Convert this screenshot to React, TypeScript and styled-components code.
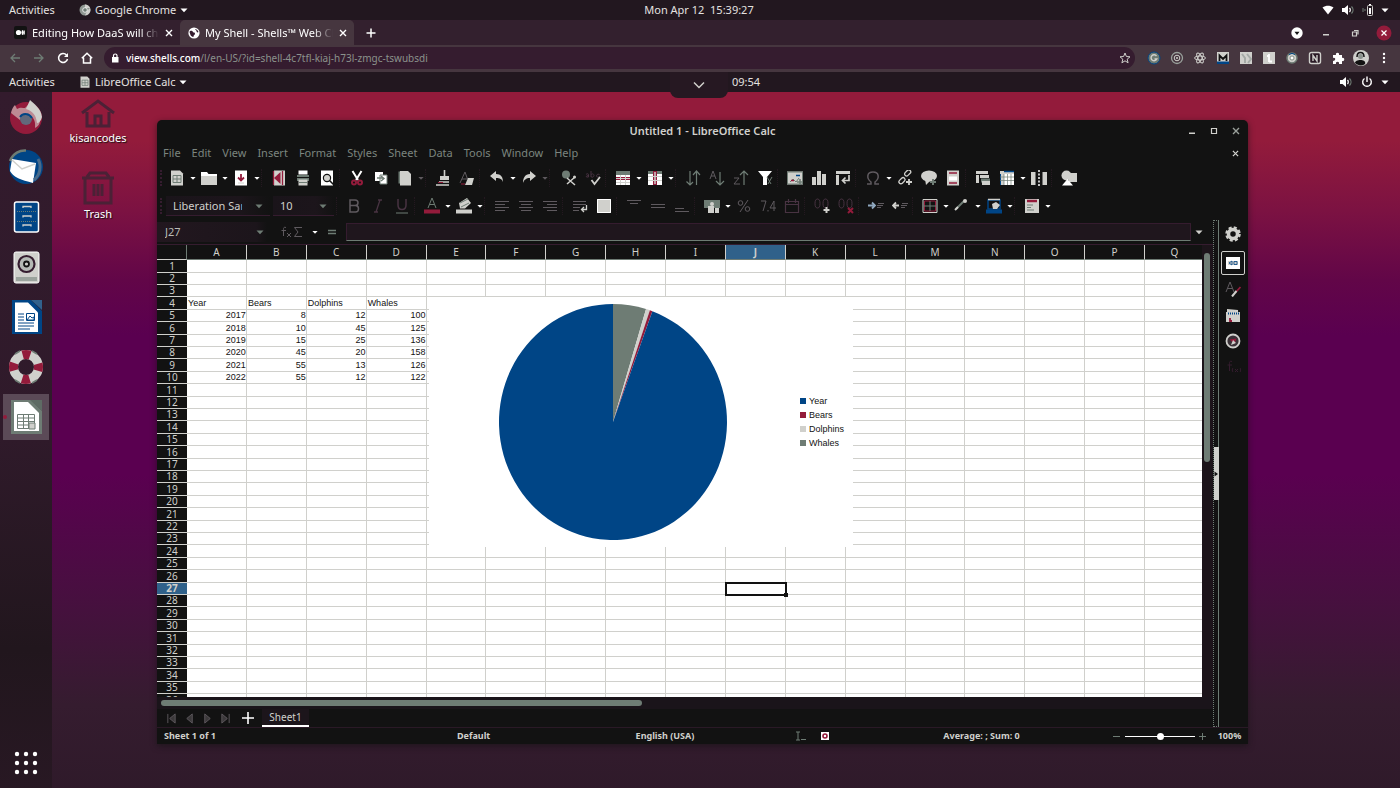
import React from "react";
import styled, { createGlobalStyle, css } from "styled-components";

const c = {
  ink: "#121212",
  plum: "#351c2f",
  bar: "#22171f",
  tabBg: "#33202e",
  chrome: "#46363f",
  magenta: "#5a0050",
  red: "#931b3b",
  blue: "#004586",
  grey: "#6e7c74",
  light: "#d0d0cc",
  white: "#ffffff",
  dim: "#5f5a5f",
  faint: "#483342",
};

const Global = createGlobalStyle`
  * { box-sizing: border-box; }
  html, body { margin: 0; padding: 0; }
  body { font-family: "Noto Sans", "Open Sans", sans-serif; font-size: 11px; line-height: 14px; background: ${c.ink}; color: ${c.light}; }
  button, input { font: inherit; color: inherit; background: none; border: 0; padding: 0; margin: 0; outline: 0; min-width: 0; }
  a { color: inherit; text-decoration: none; }
  svg { display: block; flex: none; }
`;

/* ---------- shared parts ---------- */

const Page = styled.div`
  display: flex;
  flex-direction: column;
  height: 100vh;
  min-height: 560px;
  overflow: hidden;
`;

const Caret = ({ size = 8, color = c.white }: { size?: number; color?: string }) => (
  <svg width={size} height={size} viewBox="0 0 8 8">
    <path d="M0.5 2.5h7L4 6.3z" fill={color} />
  </svg>
);

const SystemBar = styled.header`
  flex: none;
  height: 20px;
  display: grid;
  grid-template-columns: 1fr auto 1fr;
  grid-template-rows: 20px;
  align-items: center;
  background: ${c.bar};
  color: #e4e2e0;
  padding: 0 11px 0 9px;
`;

const BarSide = styled.div<{ $end?: boolean }>`
  display: flex;
  align-items: center;
  gap: ${(p) => (p.$end ? 7 : 4)}px;
  justify-content: ${(p) => (p.$end ? "flex-end" : "flex-start")};
`;

const BarButton = styled.button<{ $wide?: boolean }>`
  display: flex;
  align-items: center;
  gap: 4px;
  white-space: nowrap;
  width: ${(p) => (p.$wide ? "66px" : "auto")};
`;

/* ---------- browser ---------- */

const TabStrip = styled.div`
  flex: none;
  height: 25px;
  display: flex;
  align-items: stretch;
  background: ${c.tabBg};
  padding: 0 9px 0 6px;
`;

const BrowserTab = styled.div<{ $active?: boolean }>`
  width: 174px;
  display: flex;
  align-items: center;
  gap: 5px;
  padding: 0 6px 0 8px;
  border-radius: 5px 5px 0 0;
  background: ${(p) => (p.$active ? c.chrome : "transparent")};
`;

const TabTitle = styled.a`
  flex: 1;
  overflow: hidden;
  white-space: nowrap;
  line-height: 16px;
  color: ${c.white};
  mask-image: linear-gradient(90deg, #000 85%, transparent 100%);
`;

const IconButton = styled.button`
  display: flex;
  align-items: center;
  justify-content: center;
  width: 14px;
  height: 100%;
  flex: none;
`;

const TabClose = styled(IconButton)`
  width: 10px;
`;

const NewTab = styled(IconButton)`
  width: 34px;
`;

const WindowControls = styled.div`
  margin-left: auto;
  display: flex;
  align-items: center;
  gap: 15px;
`;

const AddressRow = styled.div`
  flex: none;
  height: 27px;
  display: flex;
  align-items: center;
  background: ${c.chrome};
  padding: 0 8px 2px 8px;
`;

const NavButtons = styled.div`
  display: flex;
  gap: 10px;
  width: 96px;
`;

const AddressBox = styled.label`
  flex: 1;
  height: 22px;
  display: flex;
  align-items: center;
  gap: 6px;
  border-radius: 11px;
  background: ${c.plum};
  padding: 0 3px 0 6px;
`;

const AddressText = styled.div`
  flex: 1;
  font-size: 10px;
  white-space: nowrap;
  overflow: hidden;
  color: #8b928c;
  b { color: ${c.white}; font-weight: 500; }
`;

const Extensions = styled.div`
  display: flex;
  align-items: center;
  gap: 7px;
  padding-left: 11px;
`;

const ExtButton = styled.button`
  display: flex;
  align-items: center;
  justify-content: center;
  width: 16px;
  height: 18px;
`;

/* ---------- remote desktop ---------- */

const Handle = styled.button`
  width: 58px;
  height: 26px;
  align-self: start;
  display: flex;
  align-items: center;
  justify-content: center;
  background: #261822;
  border-radius: 0 0 8px 8px;
  position: relative;
  z-index: 2;
`;

const ClockSide = styled.div`
  display: flex;
  align-items: center;
  justify-content: space-between;
  padding-left: 4px;
`;

const Workspace = styled.div`
  flex: 1;
  min-height: 0;
  display: flex;
`;

const Dock = styled.nav`
  flex: none;
  width: 52px;
  display: flex;
  flex-direction: column;
  align-items: center;
  gap: 4px;
  padding: 2px 3px;
  background: linear-gradient(#331b2d 0%, #2f1a2a 50%, #21161d 80%, #281823 100%);
`;

const DockItem = styled.button<{ $active?: boolean; $last?: boolean }>`
  width: 46px;
  height: 46px;
  display: flex;
  align-items: center;
  justify-content: center;
  position: relative;
  background: ${(p) => (p.$active ? "#5b4a57" : "transparent")};
  ${(p) => p.$last && css`margin-top: auto;`}
  ${(p) =>
    p.$active &&
    css`
      &::before {
        content: "";
        position: absolute;
        left: 0;
        top: 21px;
        width: 4px;
        height: 4px;
        border-radius: 50%;
        background: ${c.red};
      }
    `}
`;

const Desktop = styled.main`
  flex: 1;
  min-width: 0;
  position: relative;
  background: linear-gradient(
    ${c.red} 0%,
    ${c.red} 7%,
    #7c1242 17%,
    #620648 27%,
    ${c.magenta} 35%,
    ${c.magenta} 55%,
    #480f40 72%,
    ${c.plum} 88%,
    #2f1a2a 100%
  );
`;

const Shortcuts = styled.div`
  width: 92px;
  display: flex;
  flex-direction: column;
  gap: 24px;
  padding-top: 5px;
`;

const Shortcut = styled.button`
  display: flex;
  flex-direction: column;
  align-items: center;
  height: 48px;
  color: ${c.white};
  text-shadow: 1px 1px 1px ${c.ink};
`;

/* ---------- calc window ---------- */

const CalcWindow = styled.section`
  position: absolute;
  inset: 28px 152px 44px 105px;
  display: flex;
  flex-direction: column;
  overflow: hidden;
  background: ${c.ink};
  border-radius: 5px 5px 0 0;
  box-shadow: 0 2px 6px rgba(18, 18, 18, 0.6);
`;

const TitleBar = styled.div`
  flex: none;
  height: 22px;
  display: grid;
  grid-template-columns: 1fr auto 1fr;
  align-items: center;
  padding: 0 5px;
  h1 { margin: 0; font-size: 11px; line-height: 14px; font-weight: 600; color: ${c.light}; }
`;

const TitleButtons = styled.div`
  display: flex;
  justify-content: flex-end;
  gap: 8px;
`;

const MenuBar = styled.div`
  flex: none;
  height: 22px;
  display: flex;
  align-items: center;
  gap: 11px;
  padding: 0 6px 0 6px;
  color: #7b857f;
`;

const MenuClose = styled(IconButton)`
  margin-left: auto;
`;

const ToolRow = styled.div`
  flex: none;
  height: 28px;
  display: flex;
  align-items: center;
  padding-left: 3px;
`;

const Grip = styled.i`
  width: 5px;
  height: 16px;
  border-left: 2px dotted ${c.plum};
`;

const ToolButton = styled.button`
  width: 24px;
  height: 24px;
  flex: none;
  display: flex;
  align-items: center;
  justify-content: center;
`;

const ToolCaret = styled.button`
  width: 8px;
  height: 24px;
  flex: none;
  display: flex;
  align-items: center;
  justify-content: center;
`;

const ToolGap = styled.i<{ $wide?: boolean }>`
  width: ${(p) => (p.$wide ? 8 : 6)}px;
  height: 18px;
  flex: none;
  border-left: 1px dotted #241820;
`;

const Combo = styled.label<{ $w: number }>`
  width: ${(p) => p.$w}px;
  height: 20px;
  flex: none;
  display: flex;
  align-items: center;
  justify-content: space-between;
  padding: 0 7px;
  margin: 0 2px 0 1px;
  border-bottom: 1px solid ${c.plum};
  background: linear-gradient(90deg, #1a141a, #1c151b 70%, ${c.ink});
  color: ${c.light};
  input { width: 69px; flex: 0 1 69px; }
`;

const Body = styled.div`
  flex: 1;
  min-height: 0;
  display: flex;
`;

const SheetColumn = styled.div`
  flex: 1;
  min-width: 0;
  display: flex;
  flex-direction: column;
`;

const FormulaBar = styled.div`
  flex: none;
  height: 25px;
  display: flex;
  align-items: center;
  border-bottom: 1px solid ${c.plum};
`;

const NameBox = styled.label`
  width: 110px;
  height: 20px;
  display: flex;
  align-items: center;
  justify-content: space-between;
  padding: 0 3px 0 8px;
  background: linear-gradient(90deg, #22171f, #1c151b 90%, ${c.ink});
  color: #b9bbb7;
  input { width: 70px; }
`;

const FormulaTools = styled.div`
  width: 79px;
  display: flex;
  align-items: center;
  padding-left: 12px;
`;

const FormulaInput = styled.input`
  flex: 1;
  height: 18px;
  border: 1px solid ${c.plum};
  border-bottom-color: ${c.grey};
  background: #1f161d;
`;

const FormulaExpand = styled.button`
  width: 22px;
  height: 20px;
  padding-right: 6px;
  display: flex;
  align-items: center;
  justify-content: center;
`;

const SheetArea = styled.div`
  flex: 1;
  min-height: 0;
  display: flex;
`;

const GridPane = styled.div`
  flex: 1;
  min-width: 0;
  position: relative;
  overflow: hidden;
  background: ${c.white};
`;

const Grid = styled.table`
  width: calc(100% + 3px);
  table-layout: fixed;
  border-collapse: separate;
  border-spacing: 0;
  th, td { padding: 0; height: 12px; line-height: 11px; white-space: nowrap; }
  tr:nth-child(5n + 1) > *, tr:nth-child(5n + 4) > * { height: 13px; line-height: 12px; }
  thead tr:first-child > * { height: 15px; line-height: 14px; }
`;

const CornerCell = styled.th`
  width: 30px;
  background: ${c.ink};
  border-bottom: 1px solid ${c.light};
  border-right: 1px solid ${c.grey};
`;

const ColHead = styled.th<{ $on?: boolean }>`
  background: ${(p) => (p.$on ? "#30618a" : c.ink)};
  color: ${c.light};
  font-size: 10px;
  font-weight: ${(p) => (p.$on ? 700 : 400)};
  border-right: 1px solid ${c.light};
  border-bottom: 1px solid ${c.grey};
`;

const RowHead = styled.th<{ $on?: boolean }>`
  background: ${(p) => (p.$on ? "#30618a" : c.ink)};
  color: ${c.light};
  font-size: 10px;
  font-weight: ${(p) => (p.$on ? 700 : 400)};
  border-bottom: 1px solid ${c.light};
`;

const Cell = styled.td<{ $num?: boolean; $on?: boolean }>`
  border-right: 1px solid ${c.light};
  border-bottom: 1px solid ${c.light};
  color: ${c.ink};
  font-family: "Liberation Sans", sans-serif;
  font-size: 9px;
  text-align: ${(p) => (p.$num ? "right" : "left")};
  padding-left: 1px !important;
  ${(p) =>
    p.$on &&
    css`
      outline: 2px solid ${c.ink};
      outline-offset: -1px;
      position: relative;
      &::after {
        content: "";
        position: absolute;
        right: -3px;
        bottom: -3px;
        width: 4px;
        height: 4px;
        background: ${c.ink};
      }
    `}
`;

const Chart = styled.figure`
  position: absolute;
  left: 272px;
  top: 52px;
  width: 424px;
  height: 250px;
  margin: 0;
  display: flex;
  align-items: center;
  background: ${c.white};
  padding: 0 9px 0 69px;
  justify-content: space-between;
`;

const Legend = styled.figcaption`
  display: flex;
  flex-direction: column;
  font-family: "Liberation Sans", sans-serif;
  font-size: 9px;
  line-height: 14px;
  color: ${c.ink};
`;

const LegendItem = styled.span<{ $color: string }>`
  display: flex;
  align-items: center;
  gap: 3px;
  &::before { content: ""; width: 6px; height: 6px; background: ${(p) => p.$color}; }
`;

const VScroll = styled.div`
  flex: none;
  width: 11px;
  background: #1c141a;
  padding: 8px 3px 0 2px;
  i { display: block; width: 6px; height: 47%; border-radius: 3px; background: ${c.grey}; }
`;

const HScroll = styled.div`
  flex: none;
  height: 12px;
  padding: 3px 7px 3px 4px;
  background: #1a141a;
  i { display: block; width: 46%; height: 6px; border-radius: 3px; background: ${c.grey}; }
`;

const SheetTabs = styled.div`
  flex: none;
  height: 18px;
  display: flex;
  align-items: stretch;
  gap: 4px;
  padding-left: 7px;
`;

const AddSheet = styled(IconButton)`
  width: 20px;
  margin: 0 1px 0 2px;
`;

const SheetTab = styled.button`
  width: 47px;
  margin-left: -1px;
  font-size: 10px;
  background: #1c151b;
  color: ${c.light};
  border-bottom: 2px solid ${c.white};
`;

const Splitter = styled.div`
  flex: none;
  width: 6px;
  border: 1px dotted ${c.grey};
  border-right: 1px solid ${c.grey};
  display: flex;
  align-items: center;
  button { width: 5px; height: 53px; flex: none; background: ${c.light}; display: flex; align-items: center; }
`;

const Sidebar = styled.aside`
  flex: none;
  width: 29px;
  display: flex;
  flex-direction: column;
  align-items: center;
  gap: 2px;
  padding: 2px 1px 0 0;
`;

const SideButton = styled.button<{ $on?: boolean; $gap?: boolean }>`
  width: 24px;
  height: 24px;
  flex: none;
  display: flex;
  align-items: center;
  justify-content: center;
  border-radius: 2px;
  border: 1px solid ${(p) => (p.$on ? c.light : "transparent")};
  margin-top: ${(p) => (p.$gap ? 3 : 0)}px;
`;

const StatusBar = styled.footer`
  flex: none;
  height: 17px;
  display: grid;
  grid-template-columns: 293fr 135fr 160fr 111fr 251fr 104fr 37fr;
  align-items: center;
  border-top: 1px solid #2a1926;
  font-size: 9px;
  font-weight: 700;
  line-height: 12px;
  color: ${c.light};
`;

const StatusCell = styled.div<{ $center?: boolean; $end?: boolean }>`
  display: flex;
  align-items: center;
  gap: 14px;
  min-width: 0;
  padding: 0 ${(p) => (p.$end ? 27 : 0)}px 0 ${(p) => (p.$center || p.$end ? 0 : 7)}px;
  justify-content: ${(p) => (p.$center ? "center" : p.$end ? "flex-end" : "flex-start")};
  white-space: nowrap;
`;

const ZoomCell = styled.div`
  display: flex;
  align-items: center;
  gap: 4px;
  min-width: 0;
  padding: 0 4px 0 6px;
  button { width: 8px; height: 12px; flex: none; display: flex; align-items: center; }
`;

const ZoomRange = styled.input`
  flex: 1;
  width: 0;
  height: 8px;
  appearance: none;
  &::-webkit-slider-runnable-track { height: 1px; background: ${c.white}; }
  &::-webkit-slider-thumb { appearance: none; width: 7px; height: 7px; margin-top: -3px; border-radius: 50%; background: ${c.white}; }
`;

/* ---------- icons ---------- */

const Svg = ({ s = 16, children }: { s?: number; children: React.ReactNode }) => (
  <svg width={s} height={s} viewBox="0 0 16 16" fill="none">
    {children}
  </svg>
);

const CloseIcon = ({ color = c.light, s = 8 }: { color?: string; s?: number }) => (
  <svg width={s} height={s} viewBox="0 0 8 8" fill="none">
    <path d="M1 1l6 6M7 1L1 7" stroke={color} strokeWidth="1.4" />
  </svg>
);

const lines = (spec: [number, number, number][], color: string = c.grey) =>
  spec.map(([x, y, w], i) => <path key={i} d={`M${x} ${y}h${w}`} stroke={color} />);

const sheetGlyph = (
  <>
    <path d="M2 0.500h9l3 3v12H2z" fill={c.light} />
    <path d="M4 5.500h8v7H4zM4 9h8M8 5.500v7" stroke={c.grey} />
  </>
);

const sheetBox = <path d="M1 1h14v14H1z" fill={c.white} />;

const icons: Record<string, React.ReactNode> = {
  new: sheetGlyph,
  open: (
    <>
      <path d="M0 2h6l1.500 2H16v11H0z" fill={c.white} />
      <path d="M0 6h16v9H0z" fill={c.light} />
    </>
  ),
  save: (
    <>
      <path d="M2 .5h12v15H2z" fill={c.white} />
      <path d="M8 4v6M5 7.500l3 3 3-3" stroke={c.red} strokeWidth="1.800" />
      <path d="M5 13h6" stroke={c.light} />
    </>
  ),
  pdf: (
    <>
      <path d="M3 .5h11v15H3z" fill={c.light} />
      <path d="M9.500 2v12L3 8z" fill={c.red} />
      <path d="M2.500 1v14M11.500 1v14" stroke={c.red} strokeWidth="1.300" />
    </>
  ),
  print: (
    <>
      <path d="M3.500 .5h9v4h-9z" fill={c.white} />
      <path d="M2 5h12v6H2z" fill={c.grey} />
      <path d="M2 7.500h12" stroke={c.ink} />
      <path d="M3.500 9.500h9v6h-9z" fill={c.light} />
      <path d="M4 12.500h8" stroke={c.grey} />
    </>
  ),
  preview: (
    <>
      <path d="M2 .5h12v15H2z" fill={c.white} />
      <circle cx="8" cy="8" r="3.600" fill={c.light} stroke={c.ink} strokeWidth="1.200" />
      <path d="M10.500 10.500l4 4" stroke={c.ink} strokeWidth="1.600" />
    </>
  ),
  cut: (
    <>
      <path d="M3.500 1L9 10M12.500 1L7 10" stroke={c.white} strokeWidth="2" />
      <circle cx="5" cy="12.500" r="2" stroke={c.red} strokeWidth="2" />
      <circle cx="11" cy="12.500" r="2" stroke={c.red} strokeWidth="2" />
    </>
  ),
  copy: (
    <>
      <path d="M2 2h8v9H2z" fill={c.white} />
      <path d="M7 5h7v9H7z" fill={c.white} stroke={c.grey} />
      <path d="M4 8h6M8 6l3 2.500L8 11" stroke={c.grey} strokeWidth="1.400" />
    </>
  ),
  paste: (
    <>
      <path d="M1.500 1.500h9v12h-9z" fill={c.grey} />
      <path d="M3 1h8l3 3v11.500H3z" fill={c.light} />
    </>
  ),
  brush: (
    <>
      <path d="M9.500 0v6" stroke={c.light} strokeWidth="1.600" />
      <path d="M5 6h9v4H5z" fill={c.light} />
      <path d="M4 12h10M1 15h13" stroke={c.light} strokeWidth="1.500" />
      <path d="M3 12.500h5" stroke={c.red} />
    </>
  ),
  clear: (
    <>
      <path d="M1 13L6 2l2.500 7M3 9h5" stroke={c.dim} />
      <path d="M9 8h6l-2 7H6z" fill={c.light} />
      <path d="M2 14h4" stroke={c.red} />
    </>
  ),
  undo: <path d="M1 6l6-5v3c5 0 7 3 7 8-1-3-3-4-7-4v3z" fill={c.light} />,
  redo: <path d="M15 6L9 1v3C4 4 2 8 2 13c1-3 3-5 7-5v3z" fill={c.light} />,
  find: (
    <>
      <circle cx="5" cy="4.500" r="4" fill={c.grey} />
      <path d="M6 8l8 7M14 7l-8 7" stroke={c.light} strokeWidth="1.500" />
      <circle cx="13.500" cy="7" r="1.500" fill={c.light} />
    </>
  ),
  spell: (
    <>
      <path d="M1 4.500c1-1 2.500-1 2.500 0V7M3.500 5.500C2 5.500 1 6 1.500 7h2M6 1v6M6 5c1-2 3-1 3 .5S7 8 6 6.500M14.500 4.500c-2-1-3 .5-3 1.500s1.500 1.500 3 .5" stroke={c.faint} />
      <path d="M6.500 10l3 4 5.500-7" stroke={c.light} strokeWidth="1.800" />
    </>
  ),
  row: (
    <>
      {sheetBox}
      <path d="M1 1h14v4H1z" fill={c.grey} />
      <path d="M1 7h14v3H1z" fill={c.red} />
      <path d="M1 8.500h14" stroke={c.light} />
      <path d="M1 12.500h14M5.500 5v10M10.500 5v10" stroke={c.light} />
    </>
  ),
  col: (
    <>
      {sheetBox}
      <path d="M1 1h14v3H1z" fill={c.grey} />
      <path d="M6 1h4v14H6z" fill={c.red} />
      <path d="M8 2v12" stroke={c.light} strokeWidth="1.500" />
      <path d="M1 6.500h14M1 10.500h14" stroke={c.light} />
    </>
  ),
  sort: <path d="M5 1v14M1.500 11.500L5 15l3-3M11.500 15V1M8 5l3.500-4L15 5" stroke={c.grey} strokeWidth="1.200" />,
  asc: (
    <>
      <path d="M1 9l3-8 3 8M2 6h4" stroke={c.dim} />
      <path d="M11 2v13M7 11l4 4 4-4" stroke={c.grey} strokeWidth="1.200" />
    </>
  ),
  desc: (
    <>
      <path d="M1 8h5l-5 6h6" stroke={c.dim} />
      <path d="M11 15V1M7 5l4-4 4 4" stroke={c.grey} strokeWidth="1.200" />
    </>
  ),
  filter: (
    <>
      <path d="M1 1h14l-5 6v8H6V7z" fill={c.white} />
      <path d="M10 7l4 7M15 7l-4 7" stroke={c.grey} />
    </>
  ),
  image: (
    <>
      <path d="M0 1.500h16v13H0z" fill={c.light} />
      <path d="M.5 2h15v12H.5z" stroke={c.grey} />
      <path d="M3 12l3-3 3 3 3-4" stroke={c.grey} />
      <path d="M9 5.500h4" stroke={c.blue} strokeWidth="1.500" />
      <path d="M4 10.500h3" stroke={c.red} strokeWidth="1.500" />
      <path d="M13 9v6M10 12h6" stroke={c.grey} strokeWidth="1.600" />
    </>
  ),
  chart: <path d="M1 7h4v8H1zM6 1h4v14H6zM11 4h4v11h-4z" fill={c.light} />,
  pivot: (
    <>
      <path d="M1 1h14v3H1z" fill={c.light} />
      <path d="M1 5h3v10H1z" fill={c.light} />
      <path d="M14 5v5.500H8M10.500 7.500l-3 3 3 3" stroke={c.light} strokeWidth="1.700" />
    </>
  ),
  omega: <path d="M2 14h4v-2C1 8 2 2 8 2s7 6 2 10v2h4" stroke={c.dim} strokeWidth="1.500" />,
  link: (
    <>
      <rect x="8" y="1" width="7" height="4" rx="2" transform="rotate(-45 11 4)" stroke={c.light} strokeWidth="1.300" />
      <rect x="1" y="8.500" width="7" height="4" rx="2" transform="rotate(-45 5 10)" stroke={c.light} strokeWidth="1.300" />
      <path d="M12 9v6M9 12h6" stroke={c.light} strokeWidth="1.800" />
    </>
  ),
  comment: (
    <>
      <ellipse cx="8" cy="6" rx="8" ry="5.500" fill={c.light} />
      <path d="M4 9l1 6 4-4z" fill={c.light} />
      <path d="M12 9v6M9 12h6" stroke={c.grey} strokeWidth="2" />
    </>
  ),
  header: (
    <>
      <path d="M2 .5h12v15H2z" fill={c.light} />
      <path d="M4 3h8M4 13h8" stroke={c.red} strokeWidth="1.500" />
      <path d="M4 6.500h8v4H4z" fill={c.white} />
    </>
  ),
  area: (
    <>
      <path d="M1 1h12v3H1zM1 5h3v8H1z" fill={c.light} />
      <path d="M5 5h9v3H5z" fill={c.light} />
      <path d="M6 8.500h9v4H6z" fill={c.grey} />
      <path d="M7 11h8v4H7z" fill={c.light} />
    </>
  ),
  freeze: (
    <>
      {sheetBox}
      <path d="M1 1h14v3H1zM1 4h4v11H1z" fill={c.light} />
      <path d="M5 1.500h10" stroke={c.blue} strokeWidth="1.500" />
      <path d="M1.500 4v11" stroke={c.blue} />
      <path d="M1 7h14M1 10.500h14M5 4v11M8.500 4v11M12 4v11" stroke={c.grey} strokeWidth=".7" />
    </>
  ),
  split: (
    <>
      <path d="M0 2h4.500v13H0zM11.500 2H16v13h-4.500z" fill={c.light} />
      <path d="M8 0v16" stroke={c.white} strokeDasharray="2 1.500" strokeWidth="1.500" />
    </>
  ),
  shapes: (
    <>
      <circle cx="5.500" cy="5.500" r="5" fill={c.light} />
      <path d="M8 3h8v9H8z" fill={c.light} />
      <path d="M6.500 9l5.500 6.500H1z" fill={c.white} />
    </>
  ),
  bold: <path d="M4 2h5c4 0 4 5.500 0 5.500H4zM4 7.500h5.500c4 0 4 6.500 0 6.500H4z" stroke={c.dim} strokeWidth="1.500" />,
  italic: <path d="M8 2h4M4 14h4M10 2L6 14" stroke={c.faint} strokeWidth="1.300" />,
  underline: (
    <>
      <path d="M4 1v6c0 6 8 6 8 0V1" stroke={c.faint} strokeWidth="1.500" />
      <path d="M2 15h12" stroke={c.grey} />
    </>
  ),
  fontColor: (
    <>
      <path d="M4 10l4-10 4 10M5.500 6.500h5" stroke={c.grey} />
      <path d="M0 11.500h16v4H0z" fill={c.red} />
    </>
  ),
  fill: (
    <>
      <path d="M3 5l8-5 4 5-6 5.500H4z" fill={c.light} />
      <path d="M4 5l8-4M5 9l8-4" stroke={c.grey} />
      <path d="M0 11.500h16v4H0z" fill={c.light} />
    </>
  ),
  alignL: lines([[1, 3.5, 14], [1, 6.5, 10], [1, 9.5, 14], [1, 12.5, 10]], c.dim),
  alignC: lines([[1, 3.5, 14], [3, 6.5, 10], [1, 9.5, 14], [3, 12.5, 10]], c.dim),
  alignR: lines([[1, 3.5, 14], [5, 6.5, 10], [1, 9.5, 14], [5, 12.5, 10]], c.dim),
  wrap: (
    <>
      {lines([[1, 3.5, 13], [1, 6.5, 13], [1, 9.5, 7], [1, 12.5, 6]], c.dim)}
      <path d="M14.500 7v4.500H9.500M12 9l-2.500 2.500L12 14" stroke={c.light} strokeWidth="1.300" />
    </>
  ),
  merge: (
    <>
      <path d="M1 1h14v14H1z" fill={c.light} />
      <path d="M1.500 1.500h13v13h-13z" stroke={c.white} />
    </>
  ),
  top: lines([[1, 2.5, 14], [4, 5.5, 8]], c.dim),
  middle: lines([[1, 6.5, 14], [1, 9.5, 14]], c.dim),
  bottom: lines([[1, 10.5, 9], [1, 13.5, 14]], c.dim),
  currency: (
    <>
      <path d="M0 2h16v8H0z" fill={c.grey} />
      <path d="M4 8h6v7H4zM11 10h4v5h-4z" fill={c.light} />
      <circle cx="8" cy="6" r="2" fill={c.light} />
    </>
  ),
  percent: (
    <>
      <circle cx="4.500" cy="5" r="2.300" stroke={c.dim} />
      <circle cx="11.500" cy="11" r="2.300" stroke={c.dim} />
      <path d="M12 2L4 14" stroke={c.dim} />
    </>
  ),
  number: <path d="M1 3h5L3 13M8 12v1.500M14 13V3l-4 7h6" stroke={c.dim} />,
  date: <path d="M1.500 3.500h13v11h-13zM1.500 6.500h13M4.500 1v4M11.500 1v4" stroke={c.faint} strokeWidth="1.200" />,
  addDec: (
    <>
      <ellipse cx="3.500" cy="5.500" rx="2.500" ry="4.500" stroke={c.faint} />
      <ellipse cx="11.500" cy="5.500" rx="2.500" ry="4.500" stroke={c.faint} />
      <path d="M12.500 9v6M9.500 12h6" stroke={c.light} strokeWidth="2" />
    </>
  ),
  delDec: (
    <>
      <ellipse cx="3.500" cy="5.500" rx="2.500" ry="4.500" stroke={c.faint} />
      <ellipse cx="11.500" cy="5.500" rx="2.500" ry="4.500" stroke={c.faint} />
      <path d="M10 10l5 5M15 10l-5 5" stroke={c.red} strokeWidth="2" />
    </>
  ),
  indent: (
    <>
      <path d="M0 7.500h6M4 4.500l3 3-3 3" stroke="#8fa8bf" strokeWidth="1.800" />
      {lines([[10, 5.5, 6], [9, 7.5, 6], [9, 9.5, 4]], c.dim)}
    </>
  ),
  outdent: (
    <>
      <path d="M1 7.500h6M4 4.500l-3 3 3 3" stroke={c.light} strokeWidth="1.800" />
      {lines([[10, 5.5, 6], [9, 7.5, 6], [9, 9.5, 4]], c.dim)}
    </>
  ),
  border: (
    <>
      <path d="M1 1.500h14v13H1z" stroke={c.light} />
      <path d="M2.500 3h11v10h-11z" stroke={c.red} />
      <path d="M8 3v10M2 8h12" stroke={c.grey} />
    </>
  ),
  lineStyle: (
    <>
      <path d="M2 11l8-8" stroke={c.grey} strokeWidth="2" />
      <circle cx="11" cy="3" r="2" fill={c.light} />
      <path d="M1 12l3-3" stroke={c.light} strokeWidth="2" />
    </>
  ),
  bgColor: (
    <>
      <path d="M2 2h12v9H2z" stroke={c.blue} strokeWidth="1.500" />
      <path d="M2 1.500h12" stroke={c.light} strokeWidth="1.500" />
      <path d="M6 6l4-2 4 3-3 4H7z" fill={c.light} />
      <path d="M0 11.500h16v4H0z" fill={c.blue} />
    </>
  ),
  conditional: (
    <>
      <path d="M1 1h14v14H1z" fill={c.light} />
      <path d="M3 3h10" stroke={c.red} strokeWidth="2.500" />
      <path d="M3 7h6M3 9.500h4M3 12h7" stroke={c.grey} strokeWidth="1.200" />
    </>
  ),
};

type Tool = [name: string, label: string, caret?: 0 | 1 | 2];

const mainTools: Tool[][] = [
  [["new", "New", 1], ["open", "Open", 1], ["save", "Save", 1]],
  [["pdf", "Export as PDF"], ["print", "Print"], ["preview", "Print preview"]],
  [["cut", "Cut"], ["copy", "Copy"], ["paste", "Paste", 2]],
  [["brush", "Clone formatting"], ["clear", "Clear formatting"]],
  [["undo", "Undo", 1], ["redo", "Redo", 2]],
  [["find", "Find and replace"], ["spell", "Spelling"]],
  [["row", "Row", 1], ["col", "Column", 1]],
  [["sort", "Sort"], ["asc", "Sort ascending"], ["desc", "Sort descending"], ["filter", "AutoFilter"]],
  [["image", "Image"], ["chart", "Chart"], ["pivot", "Pivot table"]],
  [["omega", "Special character", 1], ["link", "Hyperlink"], ["comment", "Comment"], ["header", "Headers and footers"]],
  [["area", "Print area"], ["freeze", "Freeze", 1], ["split", "Split window"]],
  [["shapes", "Draw functions"]],
];

const formatTools: Tool[][] = [
  [["bold", "Bold"], ["italic", "Italic"], ["underline", "Underline"]],
  [["fontColor", "Font color", 1], ["fill", "Highlight color", 1]],
  [["alignL", "Align left"], ["alignC", "Align center"], ["alignR", "Align right"]],
  [["wrap", "Wrap text"], ["merge", "Merge cells"]],
  [["top", "Align top"], ["middle", "Center vertically"], ["bottom", "Align bottom"]],
  [["currency", "Currency", 1], ["percent", "Percent"], ["number", "Number"], ["date", "Date"]],
  [["addDec", "Add decimal place"], ["delDec", "Delete decimal place"]],
  [["indent", "Increase indent"], ["outdent", "Decrease indent"]],
  [["border", "Borders", 1], ["lineStyle", "Border style", 1], ["bgColor", "Background color", 1]],
  [["conditional", "Conditional formatting", 1]],
];

const ToolGroups = ({ groups, wideAt }: { groups: Tool[][]; wideAt?: number }) => (
  <>
    {groups.map((group, i) => (
      <React.Fragment key={i}>
        {i > 0 && <ToolGap $wide={i === wideAt} />}
        {group.map(([name, label, caret]) => (
          <React.Fragment key={name}>
            <ToolButton aria-label={label}>
              <Svg>{icons[name]}</Svg>
            </ToolButton>
            {caret ? (
              <ToolCaret aria-label={`${label} options`}>
                <Caret size={6} color={caret === 2 ? c.dim : c.white} />
              </ToolCaret>
            ) : null}
          </React.Fragment>
        ))}
      </React.Fragment>
    ))}
  </>
);

const Volume = () => (
  <svg width="14" height="12" viewBox="0 0 14 12" fill="none">
    <path d="M1 4h2.500L7 1v10L3.500 8H1z" fill={c.white} />
    <path d="M8.500 4c1 1 1 3 0 4" stroke={c.white} strokeWidth="1.300" />
    <path d="M10.500 2.500c2 2 2 5 0 7" stroke={c.grey} strokeWidth="1.200" />
  </svg>
);

const extensionIcons: { label: string; art: React.ReactNode }[] = [
  { label: "Grammar", art: <><circle cx="8" cy="8" r="6" fill={c.grey} stroke={c.blue} /><path d="M10.500 6a3 3 0 1 0 .3 3H8.500" stroke={c.light} strokeWidth="1.400" /></> },
  { label: "Target", art: <><circle cx="8" cy="8" r="5.500" stroke="#9aa19c" strokeWidth="1.300" /><circle cx="8" cy="8" r="2.800" stroke={c.light} /><circle cx="8" cy="8" r="1" fill={c.light} /></> },
  { label: "Atom", art: <g stroke={c.light}><ellipse cx="8" cy="8" rx="5.500" ry="2" /><ellipse cx="8" cy="8" rx="5.500" ry="2" transform="rotate(60 8 8)" /><ellipse cx="8" cy="8" rx="5.500" ry="2" transform="rotate(120 8 8)" /></g> },
  { label: "Mail", art: <><path d="M2 2h12v12H2z" fill={c.light} /><path d="M2 11.500h12V14H2z" fill={c.blue} /><path d="M4.500 11V5.500L8 9l3.500-3.500V11" stroke={c.ink} strokeWidth="1.800" /></> },
  { label: "Notes", art: <><path d="M2 2h12v12H2z" fill={c.light} /><path d="M4 4l3 4v5M9 4l4 5-3 4" stroke="#a5aaa6" strokeWidth="2" /></> },
  { label: "Reader", art: <><path d="M2 2h12v12H2z" fill={c.light} /><path d="M8 4v8M6 6h2M8 11.500h3" stroke={c.white} strokeWidth="1.800" /></> },
  { label: "Gear", art: <><circle cx="8" cy="8" r="5" fill={c.light} stroke={c.grey} strokeWidth="1.500" /><path d="M5 4.500a5 5 0 0 1 6 0" stroke={c.blue} strokeWidth="1" /><circle cx="8" cy="8" r="2" fill={c.white} stroke={c.grey} strokeWidth=".8" /></> },
  { label: "Notion", art: <><rect x="2.500" y="2.500" width="11" height="11" rx="2" fill="#2a1a26" stroke={c.light} strokeWidth="1.400" /><path d="M6 11V5.500l4 5.500V5" stroke={c.light} strokeWidth="1.400" /></> },
  { label: "Extensions", art: <path d="M3 5h3c-1-3 4-3 3 0h3v3c3-1 3 4 0 3v3H9c1-3-4-3-3 0H3v-3c3 0 3-4 0-3z" fill={c.white} /> },
  { label: "Profile", art: <><circle cx="8" cy="8" r="8" fill={c.light} /><path d="M2 13c0-4 12-4 10 1-2 2-7 2-10-1z" fill={c.ink} /><path d="M4 7c0-6 7-6 7 0" stroke={c.ink} strokeWidth="1.500" /><circle cx="7.500" cy="6.500" r="2.500" fill="#8c938e" /></> },
];

const dockIcons: { label: string; art: React.ReactNode }[] = [
  {
    label: "Firefox",
    art: <><circle cx="18" cy="19" r="16" fill={c.red} /><path d="M3 14c1-4 2-6 4-8l2 4c3-2 6-1 8-1l4-4c4 4 10 8 11 16 0 5-3 7-5 8 1-9-3-12-7-13-4 0-7 2-8 5z" fill="#bd8b94" /><path d="M22 1c4 4 11 8 12 17-1 4-3 6-5 6-1-9-5-12-11-14z" fill={c.light} /><circle cx="18" cy="20" r="6" fill="#62697b" /><path d="M12 18c3-4 9-4 12 1" stroke={c.blue} strokeWidth="2" /></>,
  },
  {
    label: "Thunderbird",
    art: <><circle cx="18" cy="18" r="17" fill={c.blue} /><path d="M2 12C5 4 12 1 18 1.500" stroke={c.grey} strokeWidth="2.500" /><path d="M4 10l24 4-3 20C13 31 5 28 2 22z" fill={c.white} /><path d="M4 11l10 9 13-5" stroke={c.light} strokeWidth="1.500" /><path d="M30 10c4 7 2 16-4 21" stroke="#4a6b8b" strokeWidth="3" /></>,
  },
  {
    label: "Files",
    art: <><rect x="6.500" y="3" width="24" height="30" rx="2" fill={c.blue} stroke={c.white} strokeWidth="1.500" /><path d="M9 12.500h19M9 22.500h19" stroke={c.grey} strokeDasharray="1 1" /><path d="M15 9V7.500h8V9M15 18.500V17h8v1.500M15 27.500V26h8v1.500" stroke={c.light} strokeWidth="1.300" /></>,
  },
  {
    label: "Rhythmbox",
    art: <><rect x="6" y="3" width="25" height="31" rx="2" fill={c.light} stroke={c.white} /><circle cx="18.500" cy="15" r="8" fill="#b5b9b5" stroke={c.plum} strokeWidth="2.200" /><circle cx="18.500" cy="15" r="2.500" fill={c.light} stroke={c.ink} strokeWidth="1.800" /><path d="M8 28h21v4H8z" fill="#9ba39d" /></>,
  },
  {
    label: "LibreOffice Writer",
    art: <><path d="M4 1h19l11 11v23H4z" fill={c.blue} /><path d="M7 3.500h13l10 10V33H7z" fill={c.white} /><path d="M23 1h11v10z" fill="#31618c" /><path d="M10 15h6M10 18h6M10 21h6M10 24h16M10 27h16M10 30h12" stroke={c.blue} /><path d="M18.500 14.500h8v7h-8zM19 21l3-4 2 2 2-1v3z" stroke={c.blue} /></>,
  },
  {
    label: "Help",
    art: <><circle cx="18" cy="18" r="12.500" stroke={c.light} strokeWidth="9" /><circle cx="18" cy="18" r="12.500" stroke={c.red} strokeWidth="9" strokeDasharray="7.600 12.035" strokeDashoffset="3.800" /><path d="M7 5l5-3M29 5l-5-3M7 31l5 3M29 31l-5 3" stroke={c.grey} strokeWidth="1.500" /></>,
  },
  {
    label: "LibreOffice Calc",
    art: <><path d="M3 1h20l11 11v23H3z" fill={c.grey} /><path d="M6 3h14l11 11v18H6z" fill={c.white} /><path d="M22 1h12v11z" fill="#5e6b64" /><path d="M9.500 15.500h17v14h-17zM10 19h16M10 22.500h16M10 26h16M15.500 15v14M20.500 15v14" stroke={c.grey} /><path d="M21 24h6v6h-6z" fill={c.light} stroke={c.grey} /></>,
  },
];

/* ---------- data ---------- */

const columns = "ABCDEFGHIJKLMNOPQ".split("");
const rowCount = 36;
const selected = { col: "J", row: 27 };

const sheet: Record<number, (string | number)[]> = {
  4: ["Year", "Bears", "Dolphins", "Whales"],
  5: [2017, 8, 12, 100],
  6: [2018, 10, 45, 125],
  7: [2019, 15, 25, 136],
  8: [2020, 45, 20, 158],
  9: [2021, 55, 13, 126],
  10: [2022, 55, 12, 122],
};

const seriesColors = [c.blue, c.red, c.light, c.grey];

const Pie = () => {
  const values = sheet[5] as number[];
  const total = values.reduce((a, b) => a + b, 0);
  const cx = 115;
  const cy = 119;
  const rx = 114;
  const ry = 118;
  const point = (t: number) => `${cx + rx * Math.sin(t)} ${cy - ry * Math.cos(t)}`;
  let angle = 0;
  return (
    <svg width="230" height="238" viewBox="0 0 230 238" role="img" aria-label="Pie chart">
      {[3, 2, 1, 0].map((i) => {
        const start = angle;
        angle += (values[i] / total) * Math.PI * 2;
        const large = angle - start > Math.PI ? 1 : 0;
        return (
          <path
            key={i}
            d={`M${cx} ${cy}L${point(start)}A${rx} ${ry} 0 ${large} 1 ${point(angle)}Z`}
            fill={seriesColors[i]}
          />
        );
      })}
    </svg>
  );
};

const menus = ["File", "Edit", "View", "Insert", "Format", "Styles", "Sheet", "Data", "Tools", "Window", "Help"];

/* ---------- sections ---------- */

const HostBar = () => (
  <SystemBar>
    <BarSide>
      <BarButton $wide>Activities</BarButton>
      <BarButton>
        <svg width="12" height="12" viewBox="0 0 12 12" fill="none">
          <circle cx="6" cy="6" r="5.500" fill="#8e9791" />
          <path d="M6 .5a5.500 5.500 0 0 1 5 3.500H6z" fill={c.light} />
          <path d="M11 4a5.500 5.500 0 0 1-5 7.500L8 7z" fill={c.light} />
          <circle cx="6" cy="6" r="2.300" fill={c.grey} stroke={c.white} strokeWidth=".8" />
        </svg>
        Google Chrome <Caret />
      </BarButton>
    </BarSide>
    <BarButton>Mon Apr 12&nbsp; 15:39:27</BarButton>
    <BarSide $end>
      <svg width="12" height="10" viewBox="0 0 12 10">
        <path d="M0.500 2.500C4 0 8 0 11.500 2.500L6 9.500z" fill={c.white} />
      </svg>
      <Volume />
      <svg width="12" height="12" viewBox="0 0 12 12" fill="none">
        <path d="M1 4v4M3 5v2" stroke={c.grey} />
        <rect x="5.500" y="1.500" width="5" height="10" rx="1" stroke={c.light} />
        <path d="M7 4h2v6H7zM7 0h2v1H7z" fill={c.white} />
      </svg>
      <Caret />
    </BarSide>
  </SystemBar>
);

const Browser = () => (
  <>
    <TabStrip>
      <BrowserTab>
        <svg width="13" height="13" viewBox="0 0 13 13">
          <rect width="13" height="13" rx="2" fill={c.ink} />
          <circle cx="4.500" cy="6.500" r="2.600" fill={c.white} />
          <ellipse cx="8.700" cy="6.500" rx="1.200" ry="2.600" fill={c.white} />
          <path d="M10.500 4.500v4" stroke={c.white} strokeWidth=".8" />
        </svg>
        <TabTitle href="#editing">Editing How DaaS will change</TabTitle>
        <TabClose aria-label="Close tab"><CloseIcon color={c.white} /></TabClose>
      </BrowserTab>
      <BrowserTab $active>
        <svg width="12" height="12" viewBox="0 0 12 12">
          <circle cx="6" cy="6" r="5.600" fill={c.white} />
          <path d="M1.500 5c1-2 3-1 3.500 0s2 0 2 1.500S5.500 8 5.500 9.500 3 9 2.500 8zM7 2c1 0 3 1 3.500 3-1 1-2 0-2-1S7 3 7 2z" fill={c.plum} />
        </svg>
        <TabTitle href="#shell">My Shell - Shells™ Web Client</TabTitle>
        <TabClose aria-label="Close tab"><CloseIcon color={c.white} /></TabClose>
      </BrowserTab>
      <NewTab aria-label="New tab">
        <svg width="10" height="10" viewBox="0 0 10 10" fill="none">
          <path d="M5 .5v9M.5 5h9" stroke={c.white} strokeWidth="1.500" />
        </svg>
      </NewTab>
      <WindowControls>
        <IconButton aria-label="Search tabs">
          <svg width="12" height="12" viewBox="0 0 12 12">
            <circle cx="6" cy="6" r="5.700" fill={c.white} />
            <path d="M3.500 4.800h5L6 8z" fill={c.ink} />
          </svg>
        </IconButton>
        <IconButton aria-label="Minimise">
          <svg width="8" height="8" viewBox="0 0 8 8"><path d="M1 5h6v1.500H1z" fill={c.light} /></svg>
        </IconButton>
        <IconButton aria-label="Restore">
          <svg width="8" height="8" viewBox="0 0 8 8" fill="none"><path d="M1.500 3h4v4h-4zM3 1.500h4v4" stroke={c.light} strokeWidth="1.200" /></svg>
        </IconButton>
        <IconButton aria-label="Close window">
          <svg width="16" height="16" viewBox="0 0 16 16">
            <circle cx="8" cy="8" r="7.500" fill={c.red} />
            <path d="M5.500 5.500l5 5M10.500 5.500l-5 5" stroke={c.white} strokeWidth="1.200" />
          </svg>
        </IconButton>
      </WindowControls>
    </TabStrip>
    <AddressRow>
      <NavButtons>
        <IconButton aria-label="Back">
          <svg width="12" height="12" viewBox="0 0 12 12" fill="none"><path d="M11 6H2M6 2L2 6l4 4" stroke={c.grey} strokeWidth="1.300" /></svg>
        </IconButton>
        <IconButton aria-label="Forward">
          <svg width="12" height="12" viewBox="0 0 12 12" fill="none"><path d="M1 6h9M6 2l4 4-4 4" stroke={c.grey} strokeWidth="1.300" /></svg>
        </IconButton>
        <IconButton aria-label="Reload">
          <svg width="12" height="12" viewBox="0 0 12 12" fill="none"><path d="M9.500 3a4.500 4.500 0 1 0 1 4" stroke={c.white} strokeWidth="1.500" /><path d="M11 1v4H7z" fill={c.white} /></svg>
        </IconButton>
        <IconButton aria-label="Home">
          <svg width="12" height="12" viewBox="0 0 12 12" fill="none"><path d="M.8 6.200L6 1.200l5.200 5M2.500 5.500v5.500h7V5.500" stroke={c.white} strokeWidth="1.500" /></svg>
        </IconButton>
      </NavButtons>
      <AddressBox>
        <svg width="10" height="12" viewBox="0 0 10 12" fill="none">
          <path d="M2 5h6.500v5.500H2z" fill={c.white} />
          <path d="M3.500 5V3.500c0-2 3.500-2 3.500 0V5" stroke={c.white} strokeWidth="1.200" />
        </svg>
        <AddressText>
          <b>view.shells.com</b>/l/en-US/?id=shell-4c7tfl-kiaj-h73l-zmgc-tswubsdi
        </AddressText>
        <IconButton aria-label="Bookmark">
          <svg width="12" height="12" viewBox="0 0 12 12" fill="none"><path d="M6 1l1.400 3.500 3.600.3-2.800 2.400.9 3.600L6 8.800l-3.100 2 .9-3.600L1 4.800l3.600-.3z" stroke={c.light} /></svg>
        </IconButton>
      </AddressBox>
      <Extensions>
        {extensionIcons.map(({ label, art }) => (
          <ExtButton key={label} aria-label={label}><Svg>{art}</Svg></ExtButton>
        ))}
        <ExtButton aria-label="Menu">
          <svg width="4" height="12" viewBox="0 0 4 12" fill={c.white}>
            <circle cx="2" cy="2" r="1.200" /><circle cx="2" cy="6" r="1.200" /><circle cx="2" cy="10" r="1.200" />
          </svg>
        </ExtButton>
      </Extensions>
    </AddressRow>
  </>
);

const GuestBar = () => (
  <SystemBar>
    <BarSide>
      <BarButton $wide>Activities</BarButton>
      <BarButton>
        <svg width="12" height="12" viewBox="0 0 16 16" fill="none">{sheetGlyph}</svg>
        LibreOffice Calc <Caret />
      </BarButton>
    </BarSide>
    <Handle aria-label="Show panel">
      <svg width="12" height="8" viewBox="0 0 12 8" fill="none"><path d="M1 1.500l5 5 5-5" stroke={c.light} strokeWidth="1.500" /></svg>
    </Handle>
    <ClockSide>
      <span>09:54</span>
      <BarSide $end>
        <Volume />
        <svg width="14" height="12" viewBox="0 0 14 12" fill="none">
          <path d="M4.500 2.500a4.300 4.300 0 1 0 5 0" stroke={c.white} strokeWidth="1.400" />
          <path d="M7 .5V6" stroke={c.white} strokeWidth="1.400" />
        </svg>
        <Caret />
      </BarSide>
    </ClockSide>
  </SystemBar>
);

const Spreadsheet = () => (
  <GridPane>
    <Grid>
      <thead>
        <tr>
          <CornerCell aria-label="Select all" />
          {columns.map((name) => (
            <ColHead key={name} scope="col" $on={name === selected.col}>{name}</ColHead>
          ))}
        </tr>
      </thead>
      <tbody>
        {Array.from({ length: rowCount }, (_, r) => r + 1).map((row) => (
          <tr key={row}>
            <RowHead scope="row" $on={row === selected.row}>{row}</RowHead>
            {columns.map((name, i) => {
              const value = sheet[row]?.[i];
              return (
                <Cell key={name} $num={typeof value === "number"} $on={row === selected.row && name === selected.col}>
                  {value}
                </Cell>
              );
            })}
          </tr>
        ))}
      </tbody>
    </Grid>
    <Chart>
      <Pie />
      <Legend>
        {sheet[4].map((name, i) => (
          <LegendItem key={name} $color={seriesColors[i]}>{name}</LegendItem>
        ))}
      </Legend>
    </Chart>
  </GridPane>
);

const sheetNav: [string, string][] = [
  ["First sheet", "M2 1v10M10 1v10L4 6z"],
  ["Previous sheet", "M9 1v10L3 6z"],
  ["Next sheet", "M3 1v10l6-5z"],
  ["Last sheet", "M10 1v10M2 1v10l6-5z"],
];

const Calc = () => (
  <CalcWindow>
    <TitleBar>
      <span />
      <h1>Untitled 1 - LibreOffice Calc</h1>
      <TitleButtons>
        <IconButton aria-label="Minimise">
          <svg width="8" height="8" viewBox="0 0 8 8"><path d="M1 5.500h6v1.500H1z" fill={c.light} /></svg>
        </IconButton>
        <IconButton aria-label="Maximise">
          <svg width="8" height="8" viewBox="0 0 8 8" fill="none"><path d="M1.500 1.500h5v5h-5z" stroke={c.light} strokeWidth="1.200" /></svg>
        </IconButton>
        <IconButton aria-label="Close"><CloseIcon color="#9aa09b" /></IconButton>
      </TitleButtons>
    </TitleBar>
    <MenuBar>
      {menus.map((m) => <button key={m}>{m}</button>)}
      <MenuClose aria-label="Close document"><CloseIcon s={7} /></MenuClose>
    </MenuBar>
    <ToolRow>
      <Grip />
      <ToolGroups groups={mainTools} wideAt={5} />
    </ToolRow>
    <ToolRow>
      <Grip />
      <Combo $w={104}>
        <input aria-label="Font name" defaultValue="Liberation Sans" />
        <Caret color={c.grey} />
      </Combo>
      <Combo $w={61}>
        <input aria-label="Font size" defaultValue="10" />
        <Caret color={c.grey} />
      </Combo>
      <ToolGap />
      <ToolGroups groups={formatTools} />
    </ToolRow>
    <Body>
      <SheetColumn>
        <FormulaBar>
          <NameBox>
            <input aria-label="Cell name" defaultValue="J27" />
            <Caret color={c.grey} />
          </NameBox>
          <FormulaTools>
            <IconButton aria-label="Function wizard">
              <svg width="12" height="12" viewBox="0 0 12 12" fill="none"><path d="M6 1.500C3 .5 3.500 3 3.500 5v5M1.500 4.500H6M7 7l4 4M11 7l-4 4" stroke={c.dim} /></svg>
            </IconButton>
            <TabClose aria-label="Sum">
              <svg width="10" height="12" viewBox="0 0 10 12" fill="none"><path d="M9 1.500H1.500L5 6l-3.500 4.500H9" stroke={c.dim} /></svg>
            </TabClose>
            <ToolButton aria-label="Sum options"><Caret size={6} /></ToolButton>
            <TabClose aria-label="Formula">
              <svg width="8" height="8" viewBox="0 0 8 8"><path d="M0 2.500h8M0 5.500h8" stroke={c.grey} strokeWidth="1.400" /></svg>
            </TabClose>
          </FormulaTools>
          <FormulaInput aria-label="Formula" />
          <FormulaExpand aria-label="Expand formula bar"><Caret color={c.light} /></FormulaExpand>
        </FormulaBar>
        <SheetArea>
          <Spreadsheet />
          <VScroll><i /></VScroll>
        </SheetArea>
        <HScroll><i /></HScroll>
        <SheetTabs>
          {sheetNav.map(([label, d]) => (
            <IconButton key={label} aria-label={label}>
              <svg width="11" height="11" viewBox="0 0 12 12" fill="#3b383a"><path d={d} stroke={c.dim} /></svg>
            </IconButton>
          ))}
          <AddSheet aria-label="Add sheet">
            <svg width="12" height="12" viewBox="0 0 12 12" fill="none"><path d="M6 0v12M0 6h12" stroke={c.white} strokeWidth="1.600" /></svg>
          </AddSheet>
          <SheetTab>Sheet1</SheetTab>
        </SheetTabs>
      </SheetColumn>
      <Splitter>
        <button aria-label="Hide sidebar">
          <svg width="4" height="6" viewBox="0 0 4 6"><path d="M0.500 0.500L4 3 .5 5.500z" fill={c.ink} /></svg>
        </button>
      </Splitter>
      <Sidebar>
        <SideButton aria-label="Sidebar settings">
          <Svg>
            <circle cx="8" cy="8" r="6.500" stroke={c.light} strokeWidth="2.500" strokeDasharray="3 2.100" />
            <circle cx="8" cy="8" r="4.500" stroke={c.light} strokeWidth="3.500" />
          </Svg>
        </SideButton>
        <SideButton $on $gap aria-label="Properties">
          <Svg>
            <path d="M1 2h14v12H1z" fill={c.white} />
            <path d="M3 6h10v4H3z" fill={c.light} />
            <path d="M4 8l3-2v4zM9 6.500h3v3H9z" stroke={c.blue} strokeWidth=".8" />
          </Svg>
        </SideButton>
        <SideButton aria-label="Styles">
          <Svg>
            <path d="M1 11L5 1l4 10M2.500 7.500h5" stroke={c.dim} />
            <path d="M15.500 6L11 11" stroke={c.red} strokeWidth="1.800" />
            <path d="M11.500 10L7 15.500" stroke={c.light} strokeWidth="2" />
          </Svg>
        </SideButton>
        <SideButton aria-label="Gallery">
          <Svg>
            <path d="M2 2l11 1v3H2z" fill={c.light} />
            <path d="M1 5h14v10H1z" fill={c.light} />
            <path d="M3 6.500h12" stroke={c.blue} strokeWidth="2" strokeDasharray="1 1" />
            <path d="M5 11v3h2" stroke={c.red} strokeWidth="1.800" />
          </Svg>
        </SideButton>
        <SideButton aria-label="Navigator">
          <Svg>
            <circle cx="8" cy="8" r="6.500" fill="#3a3137" stroke={c.light} strokeWidth="1.800" />
            <path d="M4.500 6.500l7-1-2 5.500z" fill={c.red} />
            <path d="M6 12l2-5 3 3z" fill={c.light} />
          </Svg>
        </SideButton>
        <SideButton aria-label="Functions">
          <Svg>
            <path d="M7 2.500C4 1.500 4.500 4 4.500 6v6M2.500 6H7M8 9c-1 1-1 3 0 4M10 10l3 3M13 10l-3 3M15 9c1 1 1 3 0 4" stroke={c.plum} />
          </Svg>
        </SideButton>
      </Sidebar>
    </Body>
    <StatusBar>
      <StatusCell>Sheet 1 of 1</StatusCell>
      <StatusCell>Default</StatusCell>
      <StatusCell $center>English (USA)</StatusCell>
      <StatusCell $end>
        <svg width="12" height="10" viewBox="0 0 12 10" fill="none"><path d="M1 1h4M3 1v8M1 9h4M6 8.500h5" stroke={c.grey} /></svg>
        <svg width="8" height="8" viewBox="0 0 8 8"><path d="M0 0h8v8H0z" fill={c.white} /><circle cx="4" cy="4" r="2" fill="none" stroke={c.red} strokeWidth="1.600" /></svg>
      </StatusCell>
      <StatusCell $center>Average: ; Sum: 0</StatusCell>
      <ZoomCell>
        <button aria-label="Zoom out"><svg width="7" height="7" viewBox="0 0 7 7"><path d="M0 3.500h7" stroke={c.grey} /></svg></button>
        <ZoomRange type="range" aria-label="Zoom" defaultValue={50} />
        <button aria-label="Zoom in"><svg width="7" height="7" viewBox="0 0 7 7"><path d="M0 3.500h7M3.500 0v7" stroke={c.grey} /></svg></button>
      </ZoomCell>
      <StatusCell $center>100%</StatusCell>
    </StatusBar>
  </CalcWindow>
);

export default function App() {
  return (
    <Page>
      <Global />
      <HostBar />
      <Browser />
      <GuestBar />
      <Workspace>
        <Dock>
          {dockIcons.map(({ label, art }, i) => (
            <DockItem key={label} aria-label={label} $active={i === dockIcons.length - 1}>
              <svg width="36" height="36" viewBox="0 0 36 36" fill="none">{art}</svg>
            </DockItem>
          ))}
          <DockItem $last aria-label="Show applications">
            <svg width="24" height="24" viewBox="0 0 24 24" fill={c.white}>
              {[3, 12, 21].map((y) => [3, 12, 21].map((x) => <circle key={`${x}-${y}`} cx={x} cy={y} r="2.200" />))}
            </svg>
          </DockItem>
        </Dock>
        <Desktop>
          <Shortcuts>
            <Shortcut>
              <svg width="36" height="34" viewBox="0 0 36 34" fill="none">
                <path d="M2 16L18 4l16 12M7 15v14h22V15M15 28v-9h6v9" stroke="#4b2136" strokeWidth="3" />
              </svg>
              kisancodes
            </Shortcut>
            <Shortcut>
              <svg width="36" height="38" viewBox="0 0 36 38" fill="none">
                <path d="M2 9h32M7 8l3-4h16l3 4M5 9v25h26V9M14 15v12M18 15v12M22 15v12" stroke="#4b2136" strokeWidth="3" />
              </svg>
              Trash
            </Shortcut>
          </Shortcuts>
          <Calc />
        </Desktop>
      </Workspace>
    </Page>
  );
}
